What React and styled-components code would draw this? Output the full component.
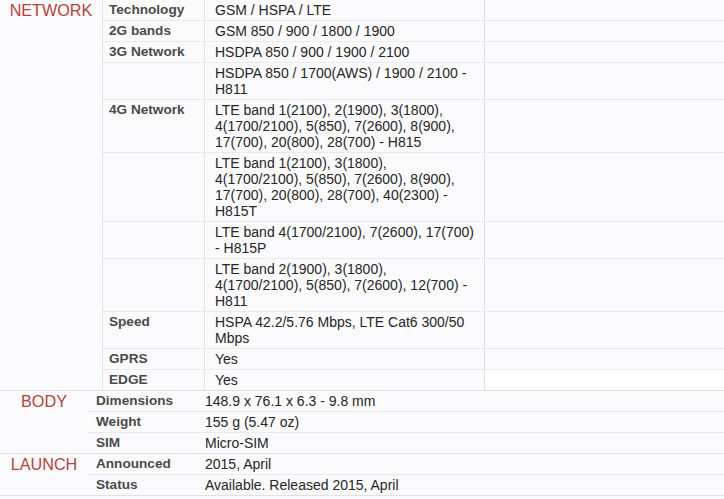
import styled, { createGlobalStyle } from "styled-components";

const GlobalStyle = createGlobalStyle`
  body {
    margin: 0;
    background: #fbfbfd;
    font-family: "Liberation Sans", Arial, sans-serif;
  }
`;

const network = [
  ["Technology", "GSM / HSPA / LTE"],
  ["2G bands", "GSM 850 / 900 / 1800 / 1900"],
  ["3G Network", "HSDPA 850 / 900 / 1900 / 2100"],
  ["", "HSDPA 850 / 1700(AWS) / 1900 / 2100 - H811"],
  ["4G Network", "LTE band 1(2100), 2(1900), 3(1800), 4(1700/2100), 5(850), 7(2600), 8(900), 17(700), 20(800), 28(700) - H815"],
  ["", "LTE band 1(2100), 3(1800), 4(1700/2100), 5(850), 7(2600), 8(900), 17(700), 20(800), 28(700), 40(2300) - H815T"],
  ["", "LTE band 4(1700/2100), 7(2600), 17(700) - H815P"],
  ["", "LTE band 2(1900), 3(1800), 4(1700/2100), 5(850), 7(2600), 12(700) - H811"],
  ["Speed", "HSPA 42.2/5.76 Mbps, LTE Cat6 300/50 Mbps"],
  ["GPRS", "Yes"],
  ["EDGE", "Yes"],
];

const sections = [
  {
    title: "BODY",
    rows: [
      ["Dimensions", "148.9 x 76.1 x 6.3 - 9.8 mm"],
      ["Weight", "155 g (5.47 oz)"],
      ["SIM", "Micro-SIM"],
    ],
  },
  {
    title: "LAUNCH",
    rows: [
      ["Announced", "2015, April"],
      ["Status", "Available. Released 2015, April"],
    ],
  },
];

export default function App() {
  return (
    <>
      <GlobalStyle />
      <Specs>
        <Section $label={102}>
          <Title>NETWORK</Title>
          <div>
            {network.map(([k, v], i) => (
              <NetRow key={i}>
                <Key $pad={6}>{k}</Key>
                <NetValue>{v}</NetValue>
                <Filler $blank={i === network.length - 1} />
              </NetRow>
            ))}
          </div>
        </Section>
        {sections.map((s) => (
          <Section key={s.title} $label={88}>
            <Title>{s.title}</Title>
            <div>
              {s.rows.map(([k, v]) => (
                <Row key={k}>
                  <Key $pad={8}>{k}</Key>
                  <Value>{v}</Value>
                </Row>
              ))}
            </div>
          </Section>
        ))}
      </Specs>
    </>
  );
}

const Specs = styled.div`
  width: 724px;
  font-size: 14px;
  line-height: 16px;
  border-bottom: 1px solid #e2e2e5;
`;

const Section = styled.div`
  display: grid;
  grid-template-columns: ${(p) => p.$label}px 1fr;
  & + & {
    border-top: 1px solid #e2e2e5;
  }
`;

const Title = styled.div`
  padding: 2px 0 0;
  text-align: center;
  color: #b8403a;
  font-size: 16.2px;
  line-height: 17px;
`;

const NetRow = styled.div`
  display: grid;
  grid-template-columns: 101px 281px 1fr;
  border-left: 1px solid #e2e2e5;
  & + & {
    border-top: 1px solid #ebebee;
  }
`;

const Row = styled.div`
  display: grid;
  grid-template-columns: 111px 1fr;
  & + & {
    border-top: 1px solid #ebebee;
  }
`;

const Key = styled.div`
  padding: 2px 4px 2px ${(p) => p.$pad}px;
  font-size: 13.6px;
  font-weight: bold;
  color: #4a4a4a;
`;

const NetValue = styled.div`
  padding: 2px 8px 2px 10px;
  color: #262626;
  border-left: 1px solid #e2e2e5;
  border-right: 1px solid #dedee2;
`;

const Value = styled.div`
  padding: 2px 6px;
  color: #262626;
`;

const Filler = styled.div`
  background: ${(p) => (p.$blank ? "#ffffff" : "transparent")};
`;
